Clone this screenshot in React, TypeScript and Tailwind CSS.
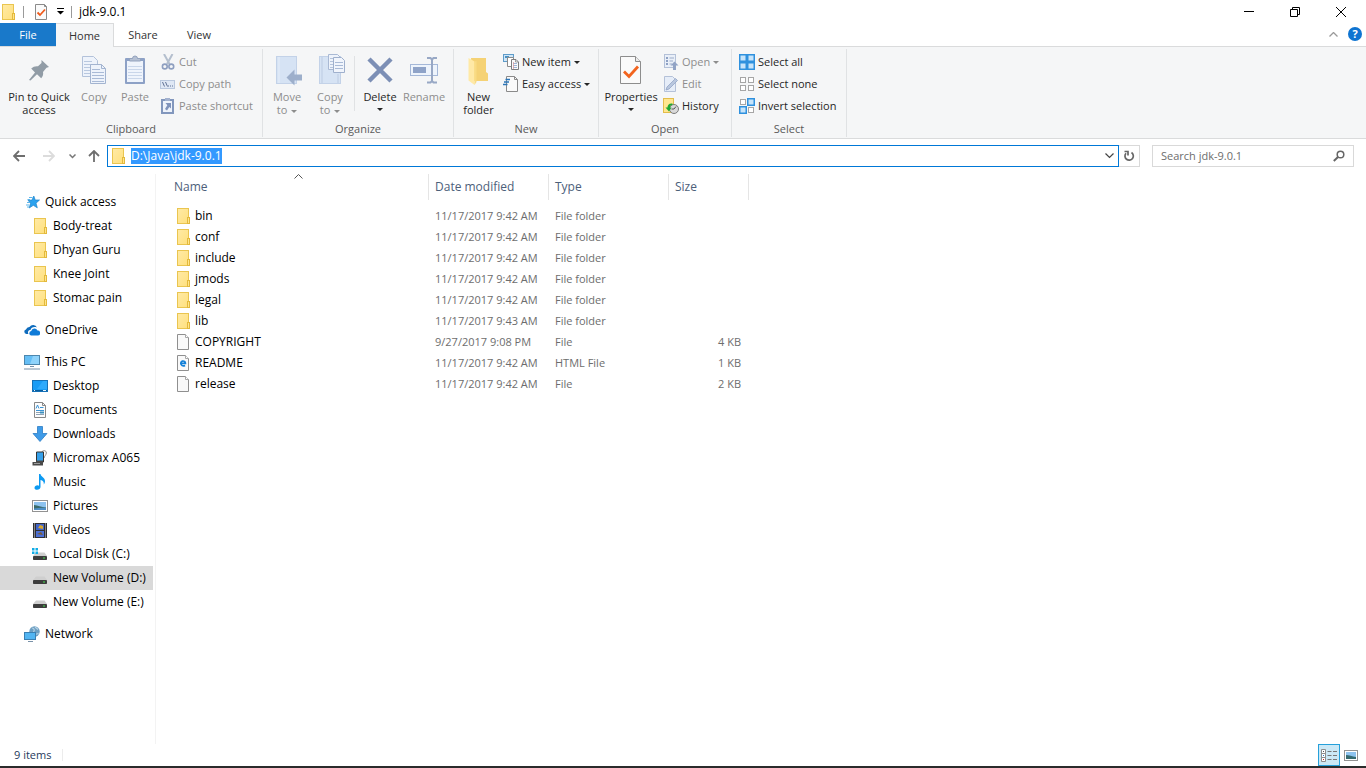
import React, { useEffect, useRef, useState } from "react";

type IconProps = { className?: string };

interface NavItem {
  label: string;
  icon: React.FC<IconProps>;
  child?: boolean;
  active?: boolean;
}

interface FileRow {
  name: string;
  modified: string;
  type: string;
  size?: string;
  icon: React.FC<IconProps>;
}

/* ---------- small icons ---------- */

const FolderIcon: React.FC<IconProps> = ({ className = "w-4 h-4" }) => (
  <svg viewBox="0 0 16 16" className={className}>
    <defs>
      <linearGradient id="folderFill" x1="0" y1="0" x2="1" y2="1">
        <stop offset="0" stopColor="#ffeaa6" />
        <stop offset="1" stopColor="#ffe07d" />
      </linearGradient>
    </defs>
    <rect x="2.5" y=".5" width="11" height="15" fill="url(#folderFill)" stroke="#eac54f" />
    <rect x="12.5" y="9.5" width="2" height="6" fill="#ffe48c" stroke="#e3b93c" />
  </svg>
);

const FileIcon: React.FC<IconProps> = ({ className = "w-4 h-4" }) => (
  <svg viewBox="0 0 16 16" className={className}>
    <path d="M2.5.5h8l3 3v12h-11z" fill="#f9f9f9" stroke="#8f8f8f" />
    <path d="M10.5.5v3h3" fill="#fff" stroke="#a8a8a8" />
  </svg>
);

const HtmlIcon: React.FC<IconProps> = ({ className = "w-4 h-4" }) => (
  <svg viewBox="0 0 16 16" className={className}>
    <path d="M2.5.5h8l3 3v12h-11z" fill="#f9f9f9" stroke="#8f8f8f" />
    <path d="M10.5.5v3h3" fill="#fff" stroke="#a8a8a8" />
    <path d="M5.8 8.3h4.6a2.300 2.300 0 1 0-4.200 1.300c.8 1.300 2.600 1.500 3.900.9" fill="none" stroke="#1380d8" strokeWidth="1.700" />
  </svg>
);

const CheckDocIcon: React.FC<IconProps> = ({ className = "w-4 h-4" }) => (
  <svg viewBox="0 0 16 16" className={className}>
    <path d="M2.5.5h9l2 2v13h-11z" fill="#fafafa" stroke="#8a8a8a" />
    <path d="M11.500.5v2h2" fill="none" stroke="#8a8a8a" />
    <path d="M4.500 8.500l2.500 2.500 5-5.500" fill="none" stroke="#f05a1a" strokeWidth="1.800" />
  </svg>
);

const CutIcon: React.FC<IconProps> = () => (
  <svg viewBox="0 0 16 16" className="w-4 h-4" fill="none">
    <path d="M4 0l5.500 10M12.500 0L7 10" stroke="#b4bfce" strokeWidth="2" />
    <circle cx="4.800" cy="12.500" r="2.400" stroke="#8e9fc0" strokeWidth="1.600" />
    <circle cx="11.300" cy="12.500" r="2.400" stroke="#8e9fc0" strokeWidth="1.600" />
  </svg>
);

const CopyPathIcon: React.FC<IconProps> = () => (
  <svg viewBox="0 0 16 16" className="w-4 h-4" fill="none">
    <rect x=".5" y="4.500" width="14" height="8" fill="#dfe8f5" stroke="#b9c8de" />
    <path d="M2.500 6l2 4.500M5.500 6l2 4.500" stroke="#5f7194" />
    <path d="M8 10h1M10 10h1M12 10h1" stroke="#5f7194" />
  </svg>
);

const PasteShortcutIcon: React.FC<IconProps> = () => (
  <svg viewBox="0 0 16 16" className="w-4 h-4">
    <rect x="1" y="1" width="13" height="15" fill="#8297bd" />
    <rect x="3" y="3" width="9" height="11" fill="#eef3fb" />
    <rect x="5" y="0" width="5" height="3" fill="#a3b2cf" />
    <path d="M5.500 5H11v5.500L9.300 9 7 12.500 5 11l2.300-3.800z" fill="#7f93bb" />
  </svg>
);

const NewItemIcon: React.FC<IconProps> = () => (
  <svg viewBox="0 0 16 16" className="w-4 h-4">
    <rect x=".5" y=".5" width="10" height="7" fill="#cfe6f7" stroke="#5d9bc9" />
    <rect x="2" y="2" width="4" height="2" fill="#4a90c2" />
    <path d="M4.500 3.500h6v9h-6z" fill="#fff" stroke="#8b8b8b" />
    <path d="M8.500 5.500h4.500l2.500 2.500v7.500h-7z" fill="#fafafa" stroke="#7d7d7d" />
    <path d="M10 9.500h4M10 11.500h4M10 13.500h4" stroke="#9fb6d6" />
    <path d="M10.500 8v7" stroke="#d99" strokeWidth=".7" />
    <path d="M12.500 5.500v2.500h2.500" fill="none" stroke="#7d7d7d" strokeWidth=".7" />
  </svg>
);

const EasyAccessIcon: React.FC<IconProps> = () => (
  <svg viewBox="0 0 16 16" className="w-4 h-4">
    <path d="M3.500.5h8l3 3v12h-11z" fill="#fafafa" stroke="#8a8a8a" />
    <path d="M11.500.5v3h3" fill="none" stroke="#8a8a8a" />
    <path d="M2.500 3.500H7M1 6h5M0 8.500h4.500" fill="none" stroke="#2a75b8" strokeWidth="1.300" />
  </svg>
);

const OpenIcon: React.FC<IconProps> = () => (
  <svg viewBox="0 0 16 16" className="w-4 h-4">
    <rect x="1.500" y=".5" width="11" height="13" fill="#e9eff8" stroke="#b4c1d8" />
    <path d="M3 3h2v2H3zM3 6h2v2H3zM3 9h2v2H3z" fill="#8ea1c4" />
    <path d="M6.500 4h4.500M6.500 7h3.500M6.500 10h2.500" stroke="#9babc8" />
    <path d="M11.500 7.500l4 4H13V16h-3v-4.500H7.500z" fill="#91a3c5" />
  </svg>
);

const EditIcon: React.FC<IconProps> = () => (
  <svg viewBox="0 0 16 16" className="w-4 h-4">
    <path d="M1.500.5h8l3 3v12h-11z" fill="#e6edf8" stroke="#b4c1d8" />
    <path d="M3 14l1-3 8.500-8.500 2 2L6 13z" fill="#b9c7de" stroke="#93a5c6" strokeWidth=".8" />
  </svg>
);

const HistoryIcon: React.FC<IconProps> = () => (
  <svg viewBox="0 0 16 16" className="w-4 h-4">
    <rect x=".5" y=".5" width="10" height="14" fill="#ffe68f" stroke="#e3bd4b" />
    <circle cx="11" cy="11" r="4.500" fill="#d9d9d9" stroke="#7c7c7c" />
    <path d="M11 11l2-2.500M11 11h-2.500" stroke="#555" />
    <path d="M9.500 5.500C6 5 4.500 7 4.500 9.500H2.500L6 13.500 8.500 9.500H7c0-1.500.5-2.500 2.500-2.500z" fill="#1fa832" />
  </svg>
);

/* four squares, filled[] marks the selected ones */
const GridIcon: React.FC<{ filled: boolean[] }> = ({ filled }) => (
  <svg viewBox="0 0 16 16" className="w-4 h-4">
    {filled.map((on, i) => {
      const x = (i % 2) * 8;
      const y = Math.floor(i / 2) * 8;
      return on ? (
        <rect key={i} x={x + 0.75} y={y + 0.75} width="6.500" height="6.500" fill="#c7e4fa" stroke="#2f91de" strokeWidth="1.500" />
      ) : (
        <rect key={i} x={x + 1.5} y={y + 1.5} width="5" height="5" fill="#fff" stroke="#a6a6a6" />
      );
    })}
  </svg>
);

const SelectAllIcon: React.FC<IconProps> = () => <GridIcon filled={[true, true, true, true]} />;
const SelectNoneIcon: React.FC<IconProps> = () => <GridIcon filled={[false, false, false, false]} />;
const InvertIcon: React.FC<IconProps> = () => <GridIcon filled={[false, true, true, false]} />;

/* ---------- large ribbon icons ---------- */

const PinIcon: React.FC<IconProps> = () => (
  <svg viewBox="0 0 32 32" className="w-8 h-8">
    <path d="M18.500 6l7.500 7-2.500.8L20 18q.8 3.500-1.800 6.200L14 20.200 7.500 26.500 6 26l6-7.500-3.800-4Q11 11.800 15 12.300L18.500 9z" fill="#919ca6" />
  </svg>
);

const CopyIcon: React.FC<IconProps> = () => (
  <svg viewBox="0 0 32 32" className="w-8 h-8">
    <path d="M4.500 2.500h11l4 4v16h-15z" fill="#eef3fb" stroke="#b3c2da" />
    <path d="M6 7.500h8M6 10.500h12M6 13.500h12M6 16.500h12M6 19.500h12" stroke="#b9c8df" />
    <path d="M12.500 10.500h11l4 4v15h-15z" fill="#eef3fb" stroke="#a3b4d0" />
    <path d="M23.500 10.500v4h4" fill="none" stroke="#a3b4d0" />
    <path d="M14 15.500h8M14 18.500h12M14 21.500h12M14 24.500h12M14 27.500h12" stroke="#a9bad6" />
  </svg>
);

const PasteIcon: React.FC<IconProps> = () => (
  <svg viewBox="0 0 32 32" className="w-8 h-8">
    <rect x="6" y="4" width="20" height="26" rx="1" fill="#8da1c6" />
    <rect x="8" y="7" width="16" height="21" fill="#eff4fc" />
    <path d="M9 12.500h14M9 15.500h14M9 18.500h14M9 21.500h14M9 24.500h14" stroke="#c9d6ea" />
    <path d="M10.500 7V4.500h3a2.500 2.500 0 0 1 5 0h3V7z" fill="#b5c0d3" stroke="#93a2bd" />
  </svg>
);

const MoveToIcon: React.FC<IconProps> = () => (
  <svg viewBox="0 0 32 32" className="w-8 h-8">
    <rect x="5.500" y="2.500" width="20" height="27" fill="#d6e3f4" stroke="#c3d2e8" />
    <path d="M8 3v26" stroke="#e6eefa" />
    <path d="M15.500 23.500l8-8v5h7.500v6h-7.500v5z" fill="#9dafcb" />
  </svg>
);

const CopyToIcon: React.FC<IconProps> = () => (
  <svg viewBox="0 0 32 32" className="w-8 h-8">
    <rect x="5.500" y="2.500" width="21" height="27" fill="#d6e3f4" stroke="#c3d2e8" />
    <path d="M8 3v26M24 20v9" stroke="#bccbe2" />
    <path d="M14.500.5h9l3 3v12h-12z" fill="#eef3fb" stroke="#a9b9d4" />
    <path d="M16 4.500h7M16 7.500h4M16 10.500h4M16 13.500h4" stroke="#b5c4dc" />
    <path d="M19.500 3.500h8l3 3v12h-11z" fill="#f1f5fc" stroke="#9fb0cd" />
    <path d="M21 8.500h8M21 11.500h8M21 14.500h8" stroke="#a9bad6" />
  </svg>
);

const DeleteIcon: React.FC<IconProps> = () => (
  <svg viewBox="0 0 32 32" className="w-8 h-8">
    <path d="M5 5l22 22M27 5L5 27" stroke="#7c8fb5" strokeWidth="4.500" />
  </svg>
);

const RenameIcon: React.FC<IconProps> = () => (
  <svg viewBox="0 0 32 32" className="w-8 h-8">
    <rect x="2.500" y="10.500" width="27" height="11" fill="#eef4fc" stroke="#a5b8d8" />
    <rect x="5" y="13" width="13" height="6" fill="#8fa3c8" />
    <path d="M19 4h3.500l1.500 1.500L25.500 4H29M24 5v22M19 28.500h3.500L24 27l1.500 1.500H29" fill="none" stroke="#98a8c5" strokeWidth="2" />
  </svg>
);

const NewFolderIcon: React.FC<IconProps> = () => (
  <svg viewBox="0 0 32 32" className="w-8 h-8">
    <path d="M8 4h15v14l2 1.500V27H10z" fill="#f5d275" />
    <path d="M5.500 4l6 3.500V31l-6-4.500z" fill="#ffe9a6" />
    <path d="M11.500 7.500V31l2-3V7z" fill="#f9db84" />
  </svg>
);

const PropertiesIcon: React.FC<IconProps> = () => (
  <svg viewBox="0 0 32 32" className="w-8 h-8">
    <path d="M5.500 2.500h15l5 5v22h-20z" fill="#fafafa" stroke="#8d8d8d" />
    <path d="M20.500 2.500v5h5" fill="#ececec" stroke="#8d8d8d" />
    <path d="M9 17.500l5 5 9-10" fill="none" stroke="#f2641e" strokeWidth="2.800" />
  </svg>
);

/* ---------- navigation icons ---------- */

const QuickIcon: React.FC<IconProps> = () => (
  <svg viewBox="0 0 16 16" className="w-4 h-4">
    <path d="M9.800 2l1.400 4h4.300L12 9.200l1.300 4.600L9.300 11.300 5.200 14l1.300-4.700L4 6.200l4-.1z" fill="#2ba2ee" stroke="#1b82cb" strokeWidth=".7" />
    <path d="M5 3.500h3.500M3.500 5.500H6M3 8.500h3M2 11h3M3 13h2" stroke="#5db5ea" />
  </svg>
);

const OneDriveIcon: React.FC<IconProps> = () => (
  <svg viewBox="0 0 16 16" className="w-4 h-4">
    <path d="M4.500 12H2.300A2.300 2.300 0 0 1 2 7.500 3.500 3.500 0 0 1 5.500 5 4.300 4.300 0 0 1 13 5.500C9.500 4.300 7 6 6.500 8 4 8 3.500 10.500 4.500 12z" fill="#0f6cbd" />
    <path d="M7 13.500a2.300 2.300 0 0 1 .2-4.500 3.400 3.400 0 0 1 6.300-.5 2.500 2.500 0 0 1 .3 5z" fill="#0f7bd8" />
  </svg>
);

const PcIcon: React.FC<IconProps> = () => (
  <svg viewBox="0 0 16 16" className="w-4 h-4">
    <rect x=".5" y="1.500" width="15" height="9" fill="#65bef5" stroke="#4d87ae" />
    <path d="M9 2h6v8H6z" fill="#8fd3fb" />
    <path d="M6 12.500h4M0 15h16" stroke="#7991a8" />
  </svg>
);

const DesktopIcon: React.FC<IconProps> = () => (
  <svg viewBox="0 0 16 16" className="w-4 h-4">
    <rect x=".5" y="2.500" width="15" height="11" fill="#189cf6" stroke="#1571b8" />
    <path d="M11 3h4v8H5z" fill="#2eaafc" />
    <path d="M1 12.500h14" stroke="#075b9c" />
    <path d="M2 12.500h1M11 12.500h3" stroke="#e7f5ff" />
  </svg>
);

const DocumentsIcon: React.FC<IconProps> = () => (
  <svg viewBox="0 0 16 16" className="w-4 h-4">
    <path d="M2.500.5h8l3 3v12h-11z" fill="#fdfdfd" stroke="#888" />
    <path d="M10.500.5v3h3" fill="none" stroke="#888" />
    <path d="M4 6.500l1.500-3.500L7 6.500M8 5.500h3.500M4 8.500h8" fill="none" stroke="#3a94d6" />
    <path d="M4 10.500h4M4 12.500h8" stroke="#8fa3b5" />
    <rect x="8" y="9.500" width="4" height="2" fill="#3d8fbe" />
  </svg>
);

const DownloadsIcon: React.FC<IconProps> = () => (
  <svg viewBox="0 0 16 16" className="w-4 h-4">
    <path d="M5.500.5h5v7h4.500L8 15.500 1 7.500h4.500z" fill="#3f9be8" stroke="#2c7cc4" strokeWidth=".8" />
  </svg>
);

const PhoneIcon: React.FC<IconProps> = () => (
  <svg viewBox="0 0 16 16" className="w-4 h-4">
    <path d="M9.500 2.500C10.500 0 14.500 0 14.300 3c-.2 2-1.800 3-2.300 5" fill="none" stroke="#888" />
    <path d="M4.500 2h7v10h-7z" fill="#35a0ea" stroke="#333" />
    <path d="M.5 14.500V12H4v-1.500h7v5H.5z" fill="#4a4a4a" />
    <path d="M2 13.500h6" stroke="#999" />
  </svg>
);

const MusicIcon: React.FC<IconProps> = () => (
  <svg viewBox="0 0 16 16" className="w-4 h-4">
    <path d="M7 0h1.500c.3 2.500 4.500 3.500 4.500 7 0 1.500-.5 2.500-1.200 3.500.3-2.800-.8-3.800-3.300-4.500V13c0 1.500-1.500 2.800-3.300 2.800S2.500 15 2.500 13.700s1.500-2.400 3-2.400q.9 0 1.500.4z" fill="#0d9af2" />
  </svg>
);

const PicturesIcon: React.FC<IconProps> = () => (
  <svg viewBox="0 0 16 16" className="w-4 h-4">
    <rect x=".5" y="2.500" width="15" height="11" fill="#fff" stroke="#929292" />
    <rect x="2" y="4" width="12" height="8" fill="#8ec3ef" />
    <path d="M2 7c4 .5 7 2 12 2.500V12H2z" fill="#3a6b6b" />
    <path d="M2 10.500c4-.5 8-1 12-.5v2H2z" fill="#4f8fc5" />
  </svg>
);

const VideosIcon: React.FC<IconProps> = () => (
  <svg viewBox="0 0 16 16" className="w-4 h-4">
    <rect x="1" y="1" width="14" height="15" fill="#2f2f33" />
    <path d="M2.500 1.500V16M13.500 1.500V16" stroke="#ddd" strokeDasharray="1 1" />
    <rect x="4" y="2" width="8" height="6" fill="#3f64c8" />
    <rect x="4" y="9" width="8" height="6" fill="#4a6fd6" />
    <path d="M6 6l2-3 3 1v3z" fill="#d8a62e" />
    <path d="M5 12l4-2 2 3z" fill="#7a5a35" />
  </svg>
);

const DriveShape = () => (
  <>
    <path d="M4 6.500h8.500L15 10H1z" fill="#cfcfcf" />
    <rect x="1" y="10" width="14" height="4" rx=".8" fill="#3d3d3d" />
    <rect x="11" y="11.500" width="2" height="1" fill="#43e04d" />
  </>
);

const DriveIcon: React.FC<IconProps> = () => (
  <svg viewBox="0 0 16 16" className="w-4 h-4">
    <DriveShape />
  </svg>
);

const SystemDriveIcon: React.FC<IconProps> = () => (
  <svg viewBox="0 0 16 16" className="w-4 h-4">
    <DriveShape />
    <path d="M0 2h2.500v2.500H0zM3.500 2H6v2.500H3.500zM0 5.500h2.500V8H0zM3.500 5.500H6V8H3.500z" fill="#12ace5" />
  </svg>
);

const NetworkIcon: React.FC<IconProps> = () => (
  <svg viewBox="0 0 16 16" className="w-4 h-4">
    <circle cx="10.500" cy="5.500" r="5.200" fill="#6d9fc2" />
    <path d="M8 2c2 0 3 2 1.500 4S13 9 14.500 7M11 1l3 2.500" fill="none" stroke="#b7d3e6" strokeWidth="1.200" />
    <rect x=".5" y="6.500" width="11" height="7" fill="#52b5f2" stroke="#3a7fb2" />
    <path d="M4 15.500h5" stroke="#7991a8" />
  </svg>
);

/* ---------- data ---------- */

const navGroups: NavItem[][] = [
  [
    { label: "Quick access", icon: QuickIcon },
    { label: "Body-treat", icon: FolderIcon, child: true },
    { label: "Dhyan Guru", icon: FolderIcon, child: true },
    { label: "Knee Joint", icon: FolderIcon, child: true },
    { label: "Stomac pain", icon: FolderIcon, child: true },
  ],
  [{ label: "OneDrive", icon: OneDriveIcon }],
  [
    { label: "This PC", icon: PcIcon },
    { label: "Desktop", icon: DesktopIcon, child: true },
    { label: "Documents", icon: DocumentsIcon, child: true },
    { label: "Downloads", icon: DownloadsIcon, child: true },
    { label: "Micromax A065", icon: PhoneIcon, child: true },
    { label: "Music", icon: MusicIcon, child: true },
    { label: "Pictures", icon: PicturesIcon, child: true },
    { label: "Videos", icon: VideosIcon, child: true },
    { label: "Local Disk (C:)", icon: SystemDriveIcon, child: true },
    { label: "New Volume (D:)", icon: DriveIcon, child: true, active: true },
    { label: "New Volume (E:)", icon: DriveIcon, child: true },
  ],
  [{ label: "Network", icon: NetworkIcon }],
];

const files: FileRow[] = [
  { name: "bin", modified: "11/17/2017 9:42 AM", type: "File folder", icon: FolderIcon },
  { name: "conf", modified: "11/17/2017 9:42 AM", type: "File folder", icon: FolderIcon },
  { name: "include", modified: "11/17/2017 9:42 AM", type: "File folder", icon: FolderIcon },
  { name: "jmods", modified: "11/17/2017 9:42 AM", type: "File folder", icon: FolderIcon },
  { name: "legal", modified: "11/17/2017 9:42 AM", type: "File folder", icon: FolderIcon },
  { name: "lib", modified: "11/17/2017 9:43 AM", type: "File folder", icon: FolderIcon },
  { name: "COPYRIGHT", modified: "9/27/2017 9:08 PM", type: "File", size: "4 KB", icon: FileIcon },
  { name: "README", modified: "11/17/2017 9:42 AM", type: "HTML File", size: "1 KB", icon: HtmlIcon },
  { name: "release", modified: "11/17/2017 9:42 AM", type: "File", size: "2 KB", icon: FileIcon },
];

/* ---------- ribbon pieces ---------- */

const Caret: React.FC<IconProps> = ({ className = "" }) => (
  <svg viewBox="0 0 6 3" className={`w-[6px] h-[3px] inline-block align-middle ${className}`}>
    <path d="M0 0h6L3 3z" fill="currentColor" />
  </svg>
);

interface BigButtonProps {
  icon: React.FC<IconProps>;
  lines: string[];
  width: string;
  disabled?: boolean;
  caret?: boolean;
}

const BigButton: React.FC<BigButtonProps> = ({ icon: Icon, lines, width, disabled, caret }) => (
  <button
    disabled={disabled}
    className={`flex flex-col items-center shrink-0 pt-1 whitespace-nowrap leading-[13px] ${width} ${
      disabled ? "text-[#8d8d8d]" : "text-[#262626]"
    }`}
  >
    <Icon />
    <span className="mt-1">
      {lines[0]}
      <br />
      {lines[1]}
      {caret && <Caret className={lines[1] ? "ml-1" : "mb-1"} />}
    </span>
  </button>
);

interface SmallButtonProps {
  icon: React.FC<IconProps>;
  label: string;
  disabled?: boolean;
  caret?: boolean;
}

const SmallButton: React.FC<SmallButtonProps> = ({ icon: Icon, label, disabled, caret }) => (
  <button
    disabled={disabled}
    className={`flex items-center gap-[3px] h-[22px] whitespace-nowrap ${
      disabled ? "text-[#8d8d8d]" : "text-[#262626]"
    }`}
  >
    <Icon />
    {label}
    {caret && <Caret />}
  </button>
);

const RibbonGroup: React.FC<{ title: string; width: string; children: React.ReactNode }> = ({
  title,
  width,
  children,
}) => (
  <section className={`flex flex-col shrink-0 border-r border-[#e0e2e4] ${width}`}>
    <div className="flex h-[72px] pt-px">{children}</div>
    <h2 className="text-center leading-4 text-[#5a5a5a]">{title}</h2>
  </section>
);

const App: React.FC = () => {
  const [path, setPath] = useState("D:\\Java\\jdk-9.0.1");
  const [search, setSearch] = useState("");
  const pathRef = useRef<HTMLInputElement>(null);

  useEffect(() => {
    pathRef.current?.focus();
    pathRef.current?.select();
  }, []);

  return (
    <div className="min-h-screen flex flex-col bg-white text-black text-[12px] leading-4 font-['Open_Sans','Noto_Sans',sans-serif]">
      {/* Title bar */}
      <header className="flex items-center h-[23px]">
        <FolderIcon className="w-4 h-4" />
        <span className="w-px h-3 bg-[#9a9a9a] ml-[7px]" />
        <button aria-label="Properties" className="ml-[9px]">
          <CheckDocIcon />
        </button>
        <button aria-label="Customize toolbar" className="ml-2">
          <svg viewBox="0 0 7 7" className="w-[7px] h-[7px]">
            <path d="M0 .5h7" stroke="#000" />
            <path d="M0 3h7L3.500 6.500z" />
          </svg>
        </button>
        <span className="w-px h-3 bg-[#9a9a9a] ml-[7px]" />
        <h1 className="ml-[7px]">jdk-9.0.1</h1>
        <div className="flex ml-auto mr-[2px]">
          <button aria-label="Minimize" className="w-[46px] h-[22px] flex items-center justify-center">
            <svg viewBox="0 0 10 10" className="w-[10px] h-[10px]">
              <path d="M0 4.500h10" stroke="#000" />
            </svg>
          </button>
          <button aria-label="Restore" className="w-[46px] h-[22px] flex items-center justify-center">
            <svg viewBox="0 0 10 10" className="w-[10px] h-[10px]" fill="none" stroke="#000">
              <path d="M.5 2.500h7v7h-7zM2.500 2.500v-2h7v7h-2" />
            </svg>
          </button>
          <button aria-label="Close" className="w-[46px] h-[22px] flex items-center justify-center">
            <svg viewBox="0 0 10 10" className="w-[10px] h-[10px]" fill="none" stroke="#000">
              <path d="M0 0l10 10M10 0L0 10" />
            </svg>
          </button>
        </div>
      </header>

      {/* Tabs */}
      <nav className="flex h-6 border-b border-[#dadbdc] text-[11px] text-[#333]">
        <button className="w-14 h-[23px] bg-[#1979ca] text-white">File</button>
        <button className="w-[58px] h-6 bg-[#f5f6f7] border-r border-t border-[#dadbdc]">Home</button>
        <button className="w-[58px] h-[23px]">Share</button>
        <button className="w-[54px] h-[23px]">View</button>
        <div className="flex items-center gap-[10px] h-[22px] ml-auto mr-1">
          <button aria-label="Collapse ribbon">
            <svg viewBox="0 0 9 5" className="w-[9px] h-[5px]" fill="none" stroke="#9a9a9a">
              <path d="M.5 4.500l4-4 4 4" strokeWidth="1.300" />
            </svg>
          </button>
          <button
            aria-label="Help"
            className="w-[14px] h-[14px] rounded-full bg-[#0f74d1] text-white font-bold leading-[14px]"
          >
            ?
          </button>
        </div>
      </nav>

      {/* Ribbon */}
      <div className="flex pt-[2px] pb-px text-[11px] bg-[#f5f6f7] border-b border-[#dadbdc]">
        <RibbonGroup title="Clipboard" width="w-[263px]">
          <BigButton icon={PinIcon} lines={["Pin to Quick", "access"]} width="w-[78px]" />
          <BigButton icon={CopyIcon} lines={["Copy"]} width="w-[32px]" disabled />
          <BigButton icon={PasteIcon} lines={["Paste"]} width="w-[50px]" disabled />
          <div className="pt-px">
            <SmallButton icon={CutIcon} label="Cut" disabled />
            <SmallButton icon={CopyPathIcon} label="Copy path" disabled />
            <SmallButton icon={PasteShortcutIcon} label="Paste shortcut" disabled />
          </div>
        </RibbonGroup>
        <RibbonGroup title="Organize" width="w-[191px]">
          <BigButton icon={MoveToIcon} lines={["Move", "to"]} width="w-[48px]" disabled caret />
          <BigButton icon={CopyToIcon} lines={["Copy", "to"]} width="w-[38px]" disabled caret />
          <span className="w-px h-[55px] mt-[6px] mx-[5px] bg-[#e0e2e4]" />
          <BigButton icon={DeleteIcon} lines={["Delete"]} width="w-[40px]" caret />
          <BigButton icon={RenameIcon} lines={["Rename"]} width="w-[48px]" disabled />
        </RibbonGroup>
        <RibbonGroup title="New" width="w-[145px]">
          <BigButton icon={NewFolderIcon} lines={["New", "folder"]} width="w-[49px]" />
          <div className="pt-px">
            <SmallButton icon={NewItemIcon} label="New item" caret />
            <SmallButton icon={EasyAccessIcon} label="Easy access" caret />
          </div>
        </RibbonGroup>
        <RibbonGroup title="Open" width="w-[133px]">
          <BigButton icon={PropertiesIcon} lines={["Properties"]} width="w-[64px]" caret />
          <div className="pt-px">
            <SmallButton icon={OpenIcon} label="Open" disabled caret />
            <SmallButton icon={EditIcon} label="Edit" disabled />
            <SmallButton icon={HistoryIcon} label="History" />
          </div>
        </RibbonGroup>
        <RibbonGroup title="Select" width="w-[115px]">
          <div className="pt-px pl-[7px]">
            <SmallButton icon={SelectAllIcon} label="Select all" />
            <SmallButton icon={SelectNoneIcon} label="Select none" />
            <SmallButton icon={InvertIcon} label="Invert selection" />
          </div>
        </RibbonGroup>
      </div>

      {/* Address bar */}
      <div className="flex items-center pl-1 pr-3 pt-[6px] pb-[5px]">
        <button aria-label="Back" className="w-[30px] flex justify-center">
          <svg viewBox="0 0 12 12" className="w-3 h-3" fill="none" stroke="#6e6e6e" strokeWidth="1.800">
            <path d="M1 6h11M6 1L1 6l5 5" />
          </svg>
        </button>
        <button aria-label="Forward" disabled className="w-[30px] flex justify-center">
          <svg viewBox="0 0 12 12" className="w-3 h-3" fill="none" stroke="#dcdcdc" strokeWidth="1.800">
            <path d="M0 6h11M6 1l5 5-5 5" />
          </svg>
        </button>
        <button aria-label="Recent locations" className="w-4 flex justify-center">
          <svg viewBox="0 0 7 5" className="w-[7px] h-[5px]" fill="none" stroke="#777" strokeWidth="1.500">
            <path d="M.5.5l3 3 3-3" />
          </svg>
        </button>
        <button aria-label="Up" className="w-[27px] flex justify-center">
          <svg viewBox="0 0 12 12" className="w-3 h-3" fill="none" stroke="#6e6e6e" strokeWidth="1.800">
            <path d="M6 1v11M1 6l5-5 5 5" />
          </svg>
        </button>
        <div className="flex flex-1 items-center h-[22px] border border-[#0078d7] pl-[2px] pr-1">
          <FolderIcon className="w-4 h-4 shrink-0" />
          <input
            ref={pathRef}
            aria-label="Address"
            value={path}
            onChange={(e) => setPath(e.target.value)}
            className="flex-1 min-w-0 ml-[5px] h-4 leading-4 outline-none selection:bg-[#3399ff] selection:text-white"
          />
          <button aria-label="Previous locations">
            <svg viewBox="0 0 9 6" className="w-[9px] h-[6px]" fill="none" stroke="#444" strokeWidth="1.200">
              <path d="M.5.5l4 4 4-4" />
            </svg>
          </button>
        </div>
        <button
          aria-label="Refresh"
          className="w-[21px] h-[22px] border border-l-0 border-[#d9d9d9] flex items-center justify-center"
        >
          <svg viewBox="0 0 12 12" className="w-3 h-3" fill="none" stroke="#666" strokeWidth="1.700">
            <path d="M8.500 2.500A4.200 4.200 0 1 1 3 3.200" />
            <path d="M1.500 1.500H5v4" />
          </svg>
        </button>
        <div className="flex items-center w-[202px] h-[22px] ml-3 px-2 border border-[#d9d9d9]">
          <input
            type="text"
            aria-label="Search"
            placeholder="Search jdk-9.0.1"
            value={search}
            onChange={(e) => setSearch(e.target.value)}
            className="flex-1 min-w-0 text-[11px] outline-none placeholder:text-[#6d6d6d]"
          />
          <svg viewBox="0 0 12 12" className="w-3 h-3" fill="none" stroke="#666">
            <circle cx="7.500" cy="4.500" r="3.300" strokeWidth="1.500" />
            <path d="M5 7L.8 11" strokeWidth="2" />
          </svg>
        </div>
      </div>

      <div className="flex flex-1 pt-[2px]">
        {/* Navigation pane */}
        <nav className="w-[156px] shrink-0 flex flex-col gap-2 pt-4 pr-[2px] border-r border-[#f3f3f3]">
          {navGroups.map((group) => (
            <ul key={group[0].label}>
              {group.map(({ label, icon: Icon, child, active }) => (
                <li key={label}>
                  <a
                    href="#"
                    className={`flex items-center gap-[5px] h-6 whitespace-nowrap ${child ? "pl-8" : "pl-6"} ${
                      active ? "bg-[#d9d9d9]" : ""
                    }`}
                  >
                    <Icon />
                    {label}
                  </a>
                </li>
              ))}
            </ul>
          ))}
        </nav>

        {/* File list */}
        <main className="flex-1">
          <table className="table-fixed w-[593px]">
            <thead>
              <tr className="text-left text-[#4c607a]">
                <th className="w-[273px] p-0 pb-[5px] font-normal">
                  <div className="relative flex items-center h-[26px] pl-[18px] border-r border-[#e5e5e5]">
                    Name
                    <svg
                      viewBox="0 0 9 5"
                      className="absolute top-0 left-[138px] w-[9px] h-[5px]"
                      fill="none"
                      stroke="#555"
                    >
                      <path d="M.5 4.500l4-4 4 4" />
                    </svg>
                  </div>
                </th>
                <th className="w-[120px] p-0 pb-[5px] font-normal">
                  <div className="flex items-center h-[26px] pl-[6px] border-r border-[#e5e5e5]">Date modified</div>
                </th>
                <th className="w-[120px] p-0 pb-[5px] font-normal">
                  <div className="flex items-center h-[26px] pl-[6px] border-r border-[#e5e5e5]">Type</div>
                </th>
                <th className="w-[80px] p-0 pb-[5px] font-normal">
                  <div className="flex items-center h-[26px] pl-[6px] border-r border-[#e5e5e5]">Size</div>
                </th>
              </tr>
            </thead>
            <tbody>
              {files.map(({ name, modified, type, size, icon: Icon }) => (
                <tr key={name} className="h-[21px] text-[11px] text-[#6d6d6d] whitespace-nowrap">
                  <td className="p-0 text-[12px] text-black">
                    <div className="flex items-center gap-1 pl-[19px]">
                      <Icon />
                      {name}
                    </div>
                  </td>
                  <td className="p-0 pl-[6px]">{modified}</td>
                  <td className="p-0 pl-[6px]">{type}</td>
                  <td className="p-0 pr-2 text-right">{size}</td>
                </tr>
              ))}
            </tbody>
          </table>
        </main>
      </div>

      {/* Status bar */}
      <footer className="flex items-center h-6 pl-[14px] pr-2 border-b-2 border-[#2b2b2b] text-[11px] text-[#1e395b]">
        <span className="w-12">9 items</span>
        <span className="w-px h-3 bg-[#ececec]" />
        <button
          aria-label="Details view"
          className="ml-auto w-[22px] h-[22px] flex items-center justify-center border border-[#26a0da] bg-[#cbe8f6]"
        >
          <svg viewBox="0 0 16 13" className="w-4 h-[13px]">
            <path d="M.5.5h4v4h-4zM.5 4.500h4v4h-4zM.5 8.500h4v4h-4z" fill="#fff" stroke="#8d8d8d" />
            <path d="M2 2h1v1H2z" fill="#555" />
            <path d="M2 6h1v1H2z" fill="#2876c4" />
            <path d="M2 10h1v1H2z" fill="#c22" />
            <path d="M6.500 2.500h4M12 2.500h4M6.500 6.500h4M12 6.500h4M6.500 10.500h4M12 10.500h4" stroke="#777" />
          </svg>
        </button>
        <button aria-label="Large icons view" className="ml-1">
          <svg viewBox="0 0 14 11" className="w-[14px] h-[11px]">
            <rect x=".5" y=".5" width="13" height="10" fill="#fff" stroke="#929292" />
            <rect x="2" y="2" width="10" height="7" fill="#8ec3ef" />
            <path d="M2 5c3 0 6 1.500 10 2v2H2z" fill="#356a70" />
          </svg>
        </button>
      </footer>
    </div>
  );
};

export default App;
